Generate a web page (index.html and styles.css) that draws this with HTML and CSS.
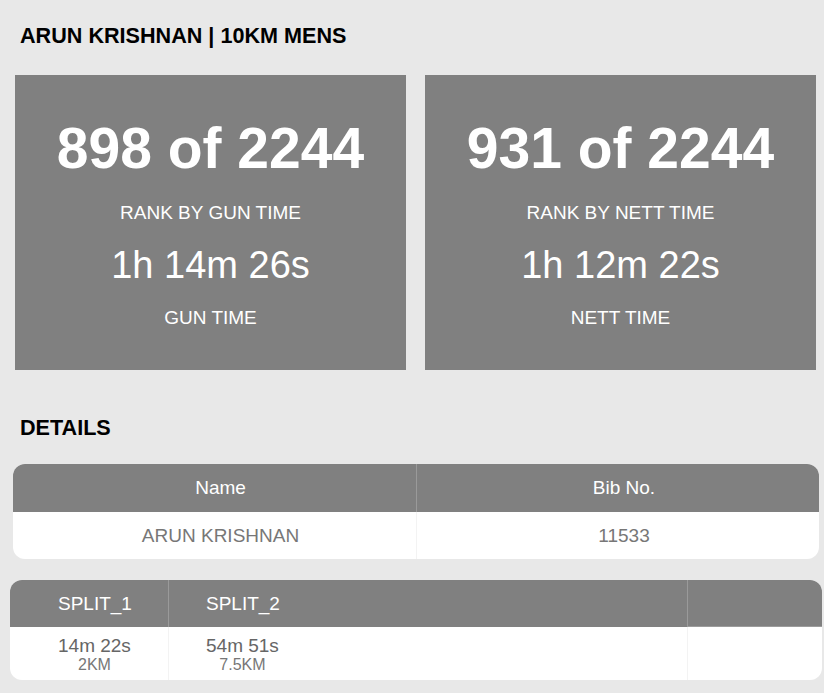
FILE: index.html
```html
<!DOCTYPE html>
<html>
<head>
<meta charset="utf-8">
<link rel="stylesheet" href="styles.css">
</head>
<body>
<div class="page">
  <h1 class="title">ARUN KRISHNAN | 10KM MENS</h1>
  <div class="stats">
    <div class="stat">
      <div class="rank">898 of 2244</div>
      <div class="label label-rank">RANK BY GUN TIME</div>
      <div class="time">1h 14m 26s</div>
      <div class="label label-time">GUN TIME</div>
    </div>
    <div class="stat">
      <div class="rank">931 of 2244</div>
      <div class="label label-rank">RANK BY NETT TIME</div>
      <div class="time">1h 12m 22s</div>
      <div class="label label-time">NETT TIME</div>
    </div>
  </div>

  <h2 class="title details-title">DETAILS</h2>
  <div class="details">
    <div class="dhead">Name</div>
    <div class="dhead">Bib No.</div>
    <div class="dcell">ARUN KRISHNAN</div>
    <div class="dcell">11533</div>
  </div>

  <div class="splits">
    <div class="shead s1">SPLIT_1</div>
    <div class="shead s2">SPLIT_2</div>
    <div class="shead s3"></div>
    <div class="scell s1"><div class="sv"><span class="val">14m 22s</span><span class="km">2KM</span></div></div>
    <div class="scell s2"><div class="sv"><span class="val">54m 51s</span><span class="km">7.5KM</span></div></div>
    <div class="scell s3"></div>
  </div>
</div>
</body>
</html>
```
FILE: styles.css
```css
html, body {
  margin: 0;
  padding: 0;
  background: #e8e8e8;
  font-family: "Liberation Sans", Arial, sans-serif;
}
.page {
  padding-top: 25px;
  width: 824px;
  height: 693px;
  overflow: hidden;
  box-sizing: border-box;
}
.title {
  margin: 0 0 28px 20px;
  font-size: 21.6px;
  line-height: 22px;
  font-weight: bold;
  color: #000;
}
.stats {
  display: flex;
  gap: 19px;
  margin: 0 8px 0 15px;
}
.stat {
  flex: 1;
  background: #808080;
  color: #fff;
  text-align: center;
  padding: 45px 0 0;
  height: 295px;
  box-sizing: border-box;
}
.rank {
  font-size: 57px;
  line-height: 57px;
  font-weight: bold;
}
.label {
  font-size: 19px;
  line-height: 19px;
}
.label-rank { margin-top: 26px; }
.time {
  font-size: 38px;
  line-height: 38px;
  margin-top: 24px;
}
.label-time { margin-top: 24px; }

.details-title {
  margin-top: 47px;
  margin-bottom: 25px;
}
.details {
  display: grid;
  grid-template-columns: 1fr 1fr;
  margin: 0 5px 0 13px;
  border-radius: 12px;
  overflow: hidden;
  background: #fff;
}
.dhead {
  background: #808080;
  color: #fff;
  height: 48px;
  display: flex;
  align-items: center;
  justify-content: center;
  padding-left: 12px;
  font-size: 19px;
}
.dhead + .dhead { border-left: 1px solid #9a9a9a; }
.dcell {
  height: 47px;
  display: flex;
  align-items: center;
  justify-content: center;
  padding-left: 12px;
  font-size: 19px;
  color: #777;
}
.dcell + .dcell { border-left: 1px solid #f3f3f3; }

.splits {
  display: grid;
  grid-template-columns: 158px 1fr 135px;
  margin: 21px 2px 0 10px;
  border-radius: 12px;
  overflow: hidden;
  background: #fff;
}
.shead {
  background: #808080;
  color: #fff;
  height: 47px;
  display: flex;
  align-items: center;
  font-size: 19px;
  box-sizing: border-box;
}
.s1 { padding-left: 48px; }
.s2 { padding-left: 37px; border-left: 1px solid #9a9a9a; }
.s3 { border-left: 1px solid #9a9a9a; }
.scell.s2, .scell.s3 { border-left-color: #f3f3f3; }
.shead.s3 { border-bottom: 1px solid #9c9c9c; }
.scell {
  height: 53px;
  padding-top: 9px;
  box-sizing: border-box;
}
.sv {
  display: inline-flex;
  flex-direction: column;
  align-items: center;
}
.val {
  font-size: 19px;
  line-height: 19px;
  color: #666;
}
.km {
  font-size: 16px;
  line-height: 16px;
  margin-top: 2px;
  color: #777;
}
```
